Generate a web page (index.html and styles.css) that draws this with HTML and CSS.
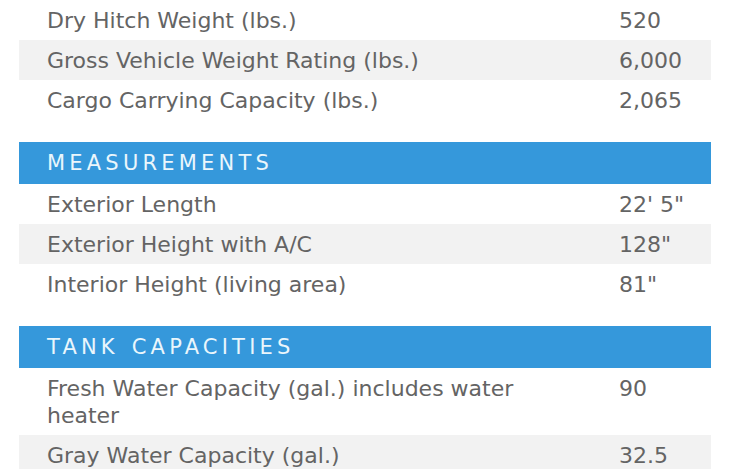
FILE: index.html
```html
<!DOCTYPE html>
<html>
<head>
<meta charset="utf-8">
<link rel="stylesheet" href="styles.css">
</head>
<body>
<div class="specs">
  <table class="spec-table">
    <colgroup><col class="col-label"><col class="col-value"></colgroup>
    <tbody>
      <tr><td class="label">Dry Hitch Weight (lbs.)</td><td class="value">520</td></tr>
      <tr><td class="label">Gross Vehicle Weight Rating (lbs.)</td><td class="value">6,000</td></tr>
      <tr><td class="label">Cargo Carrying Capacity (lbs.)</td><td class="value">2,065</td></tr>
    </tbody>
  </table>
  <table class="spec-table">
    <colgroup><col class="col-label"><col class="col-value"></colgroup>
    <thead><tr><th colspan="2" class="section">MEASUREMENTS</th></tr></thead>
    <tbody>
      <tr><td class="label">Exterior Length</td><td class="value">22' 5"</td></tr>
      <tr><td class="label">Exterior Height with A/C</td><td class="value">128"</td></tr>
      <tr><td class="label">Interior Height (living area)</td><td class="value">81"</td></tr>
    </tbody>
  </table>
  <table class="spec-table">
    <colgroup><col class="col-label"><col class="col-value"></colgroup>
    <thead><tr><th colspan="2" class="section">TANK CAPACITIES</th></tr></thead>
    <tbody>
      <tr><td class="label">Fresh Water Capacity (gal.) includes water heater</td><td class="value">90</td></tr>
      <tr><td class="label">Gray Water Capacity (gal.)</td><td class="value">32.5</td></tr>
    </tbody>
  </table>
</div>
</body>
</html>
```
FILE: styles.css
```css
html, body {
  margin: 0;
  padding: 0;
  background: #ffffff;
}
.specs {
  padding-left: 19px;
  width: 692px;
  display: flex;
  flex-direction: column;
  gap: 22px;
}
.spec-table {
  width: 692px;
  border-collapse: collapse;
  table-layout: fixed;
  font-family: "DejaVu Sans", Verdana, sans-serif;
  font-size: 22px;
  color: #646464;
}
.col-label {
  width: 572px;
}
.col-value {
  width: 120px;
}
.spec-table td {
  padding: 7px 28px 6px 28px;
  line-height: 27px;
  vertical-align: top;
  white-space: normal;
}
.spec-table td.value {
  white-space: nowrap;
}
.spec-table tbody tr:nth-child(even) td {
  background: #f2f2f2;
}
.spec-table th.section {
  background: #3598db;
  color: #eaf6fc;
  text-align: left;
  font-weight: normal;
  letter-spacing: 4.2px;
  word-spacing: 2px;
  padding: 8px 28px 7px 28px;
  line-height: 27px;
  font-size: 21px;
}
```
